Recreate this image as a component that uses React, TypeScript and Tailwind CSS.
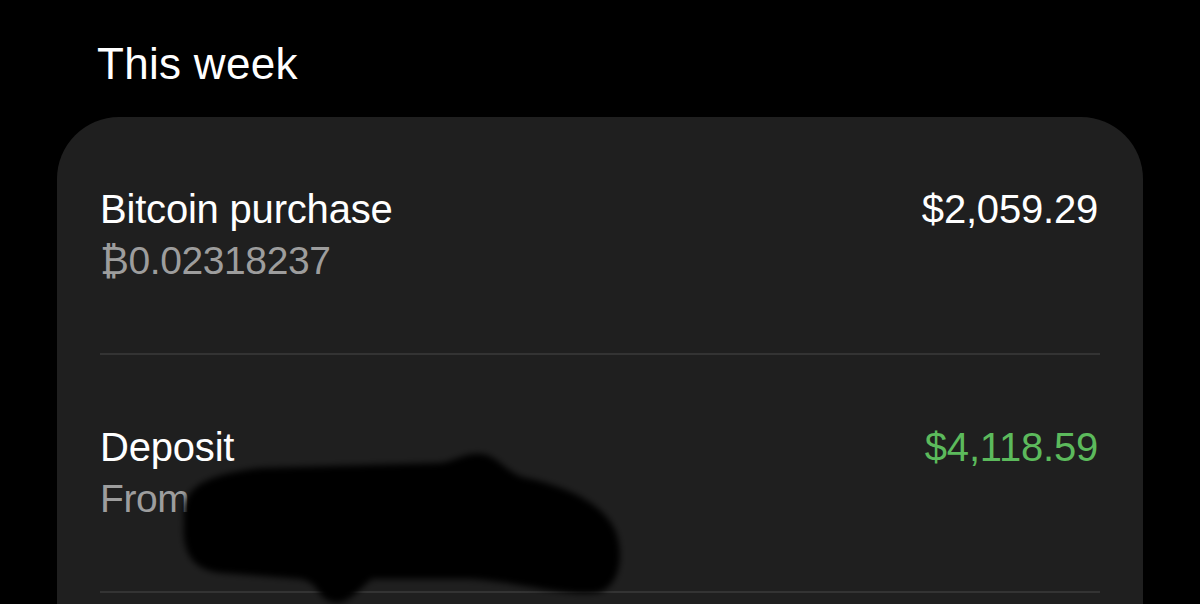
import React from "react";

const font = { fontFamily: '"Liberation Sans", Arial, sans-serif' };

function Row({
  title,
  sub,
  amount,
  green,
}: {
  title: string;
  sub: string;
  amount: string;
  green?: boolean;
}) {
  return (
    <div className="relative">
      <div className="flex justify-between pt-[66px] pb-[66px] text-[40px] leading-[52px]">
        <div className="flex flex-col">
          <span className="text-white tracking-[-0.2px]">{title}</span>
          <span className="text-[#9d9d9d] text-[39px] tracking-[-0.4px]">{sub}</span>
        </div>
        <span className={(green ? "text-[#5cba5c]" : "text-white") + " pr-[2px] tracking-[-0.2px]"}>
          {amount}
        </span>
      </div>
      <div className="h-[2px] bg-[#333333]" />
    </div>
  );
}

export default function App() {
  return (
    <div className="w-full h-[604px] bg-black overflow-hidden relative" style={font}>
      <div className="pl-[97px] pt-[38px] mb-[27px] text-[44px] leading-[52px] text-white tracking-[0.3px]">
        This week
      </div>
      <div className="mx-[57px] bg-[#1f1f1f] rounded-[62px] px-[43px] pb-[100px]">
        <Row title="Bitcoin purchase" sub="₿0.02318237" amount="$2,059.29" />
        <Row title="Deposit" sub="From" amount="$4,118.59" green />
      </div>
      <svg
        className="absolute left-0 top-0 pointer-events-none"
        width="1200"
        height="604"
        viewBox="0 0 1200 604"
      >
        <defs>
          <filter id="blur" x="-10%" y="-10%" width="120%" height="120%">
            <feGaussianBlur stdDeviation="3" />
          </filter>
        </defs>
        <path
          filter="url(#blur)"
          fill="#060606"
          d="M 184 522 C 180 490, 200 475, 260 468 L 440 463 C 456 461, 468 450, 487 455 C 500 460, 505 470, 522 477 C 565 486, 603 502, 616 532 C 626 562, 616 590, 596 593 C 560 596, 520 582, 470 579 L 372 579 C 358 590, 348 606, 332 602 C 316 598, 320 582, 300 579 L 222 573 C 196 571, 181 556, 184 522 Z"
        />
      </svg>
    </div>
  );
}
